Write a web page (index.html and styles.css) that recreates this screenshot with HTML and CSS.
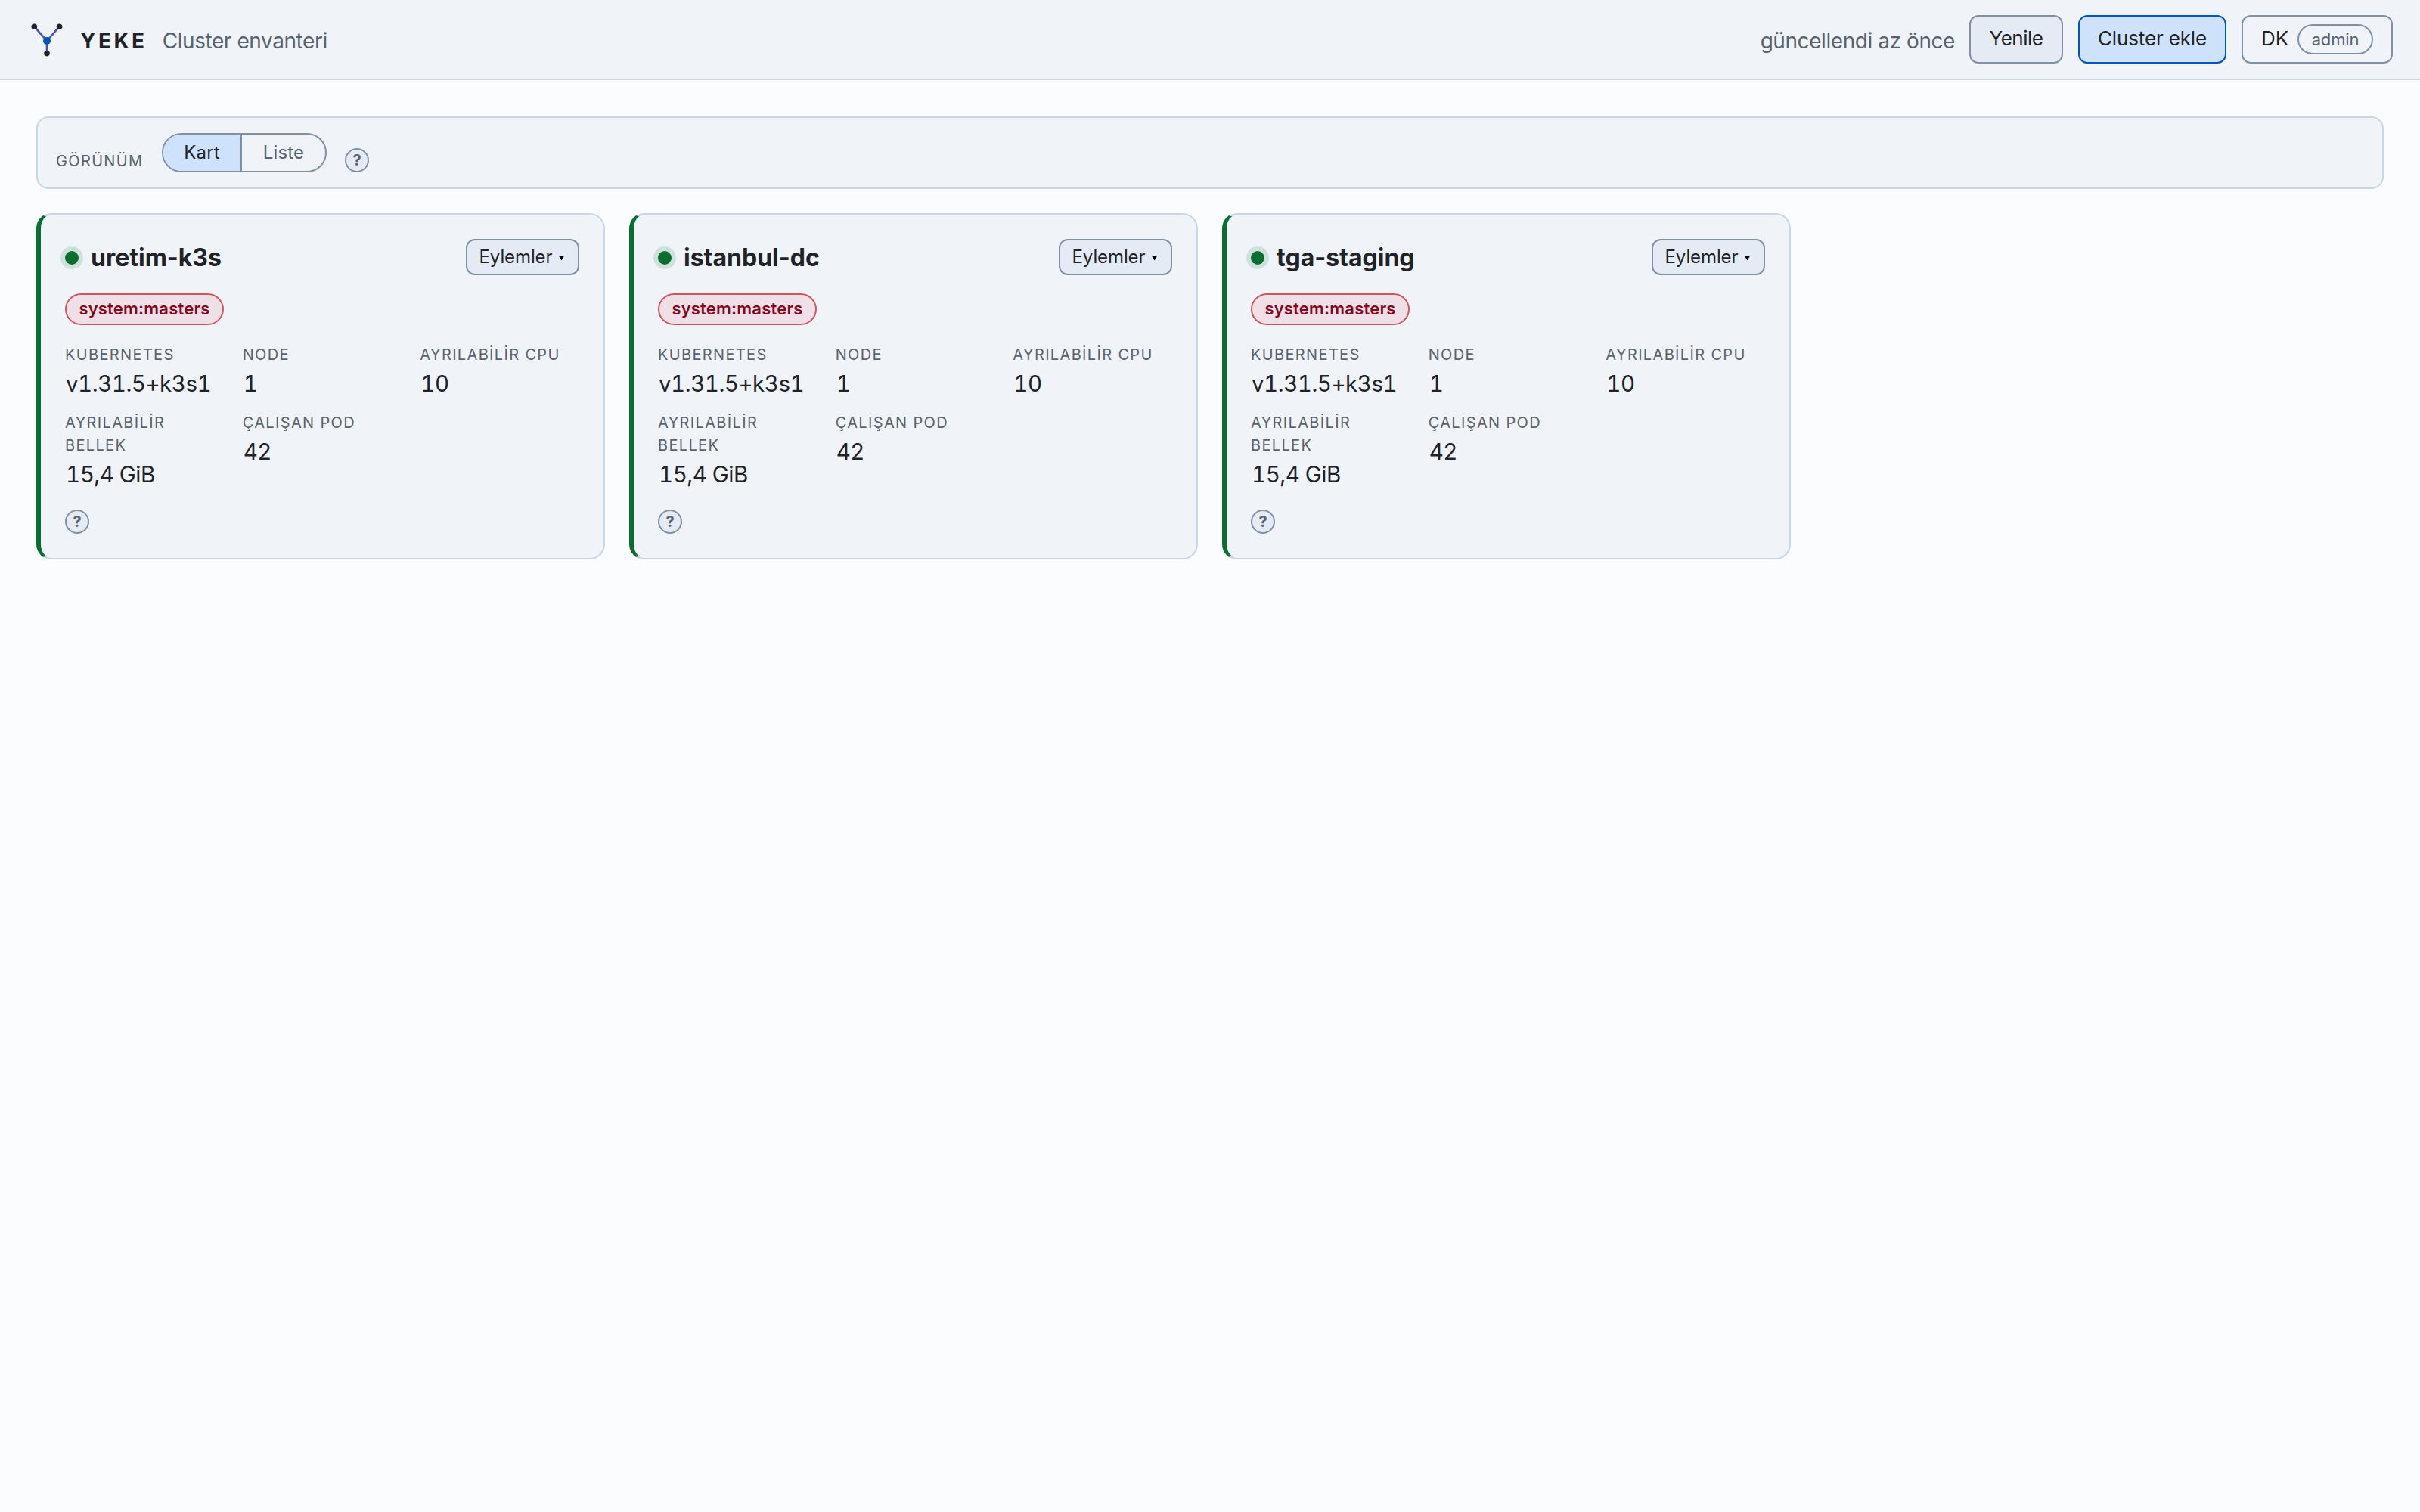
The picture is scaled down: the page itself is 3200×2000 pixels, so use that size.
FILE: index.html
```html
<!DOCTYPE html>
<html lang="tr">
  <head>
    <meta charset="UTF-8" />
    <meta name="viewport" content="width=device-width,initial-scale=1.0" />
    <title>YEKE - Cluster envanteri</title>
    <link rel="stylesheet" href="styles.css">
  </head>
  <body>
    <header class="topbar">
      <svg class="logo" viewBox="0 0 52 52" aria-hidden="true">
        <path d="M9.3 9.2 26 28 42.6 9.2M26 28v16.6" />
        <circle class="node" cx="9.3" cy="9.2" r="3.8" />
        <circle class="node" cx="42.6" cy="9.2" r="3.8" />
        <circle class="node" cx="26" cy="44.6" r="3.8" />
        <circle class="hub" cx="26" cy="28" r="5" />
      </svg>
      <strong class="brand">YEKE</strong>
      <span class="muted page-name">Cluster envanteri</span>
      <span class="muted updated">güncellendi az önce</span>
      <button class="btn btn-refresh">Yenile</button>
      <button class="btn btn-primary">Cluster ekle</button>
      <button class="btn btn-user">DK <span class="role">admin</span></button>
    </header>
    <main>
      <div class="toolbar">
        <span class="label">GÖRÜNÜM</span>
        <div class="segment">
          <button class="active">Kart</button>
          <button>Liste</button>
        </div>
        <button class="help">?</button>
      </div>
      <div class="cards">
        <article class="card">
          <div class="card-head">
            <span class="dot"></span>
            <h2>uretim-k3s</h2>
            <button class="btn-actions">Eylemler <svg viewBox="0 0 8 7"><path d="M0 0h8L4 7z" /></svg></button>
          </div>
          <span class="pill">system:masters</span>
          <dl>
            <div><dt>KUBERNETES</dt><dd>v1.31.5+k3s1</dd></div>
            <div><dt>NODE</dt><dd>1</dd></div>
            <div><dt>AYRILABİLİR CPU</dt><dd>10</dd></div>
            <div><dt>AYRILABİLİR BELLEK</dt><dd>15,4 GiB</dd></div>
            <div><dt>ÇALIŞAN POD</dt><dd>42</dd></div>
          </dl>
          <button class="help">?</button>
        </article>
        <article class="card">
          <div class="card-head">
            <span class="dot"></span>
            <h2>istanbul-dc</h2>
            <button class="btn-actions">Eylemler <svg viewBox="0 0 8 7"><path d="M0 0h8L4 7z" /></svg></button>
          </div>
          <span class="pill">system:masters</span>
          <dl>
            <div><dt>KUBERNETES</dt><dd>v1.31.5+k3s1</dd></div>
            <div><dt>NODE</dt><dd>1</dd></div>
            <div><dt>AYRILABİLİR CPU</dt><dd>10</dd></div>
            <div><dt>AYRILABİLİR BELLEK</dt><dd>15,4 GiB</dd></div>
            <div><dt>ÇALIŞAN POD</dt><dd>42</dd></div>
          </dl>
          <button class="help">?</button>
        </article>
        <article class="card">
          <div class="card-head">
            <span class="dot"></span>
            <h2>tga-staging</h2>
            <button class="btn-actions">Eylemler <svg viewBox="0 0 8 7"><path d="M0 0h8L4 7z" /></svg></button>
          </div>
          <span class="pill">system:masters</span>
          <dl>
            <div><dt>KUBERNETES</dt><dd>v1.31.5+k3s1</dd></div>
            <div><dt>NODE</dt><dd>1</dd></div>
            <div><dt>AYRILABİLİR CPU</dt><dd>10</dd></div>
            <div><dt>AYRILABİLİR BELLEK</dt><dd>15,4 GiB</dd></div>
            <div><dt>ÇALIŞAN POD</dt><dd>42</dd></div>
          </dl>
          <button class="help">?</button>
        </article>
      </div>
    </main>
  </body>
</html>
```
FILE: styles.css
```css
:root {
  --bg: #fbfcfe;
  --surface: #f0f4f9;
  --raised: #e4ebf4;
  --border: #cbd6e4;
  --border-strong: #8190a2;
  --text: #1f2328;
  --muted: #59636e;
  --accent: #0055be;
  --accent-soft: #cfe2fb;
  --ok: #0b6e31;
  --danger: #86061d;
}
* {
  box-sizing: border-box;
}
body {
  margin: 0;
  min-height: 100vh;
  background: var(--bg);
  color: var(--text);
  font-family: Inter, "Liberation Sans", sans-serif;
  font-size: 28px;
}
button {
  margin: 0;
  padding: 0;
  color: inherit;
  font-family: inherit;
  cursor: pointer;
}

/* top bar */
.topbar {
  display: flex;
  align-items: center;
  height: 106px;
  padding: 0 36px;
  background: var(--surface);
  border-bottom: 2px solid var(--border);
}
.logo {
  width: 52px;
  height: 52px;
}
.logo path {
  fill: none;
  stroke: #4a55ad;
  stroke-width: 2.6;
}
.logo .node {
  fill: var(--text);
}
.logo .hub {
  fill: var(--accent);
}
.brand {
  margin-left: 18px;
  padding-top: 4px;
  letter-spacing: 3.5px;
}
.muted {
  padding-top: 4px;
  color: var(--muted);
  letter-spacing: -0.43px;
}
.page-name {
  margin-left: 20px;
}
.updated {
  margin-left: auto;
  margin-right: -1px;
}
.btn {
  display: flex;
  align-items: center;
  justify-content: center;
  height: 64px;
  margin-left: 20px;
  padding-bottom: 4px;
  border: 2px solid var(--border-strong);
  border-radius: 12px;
  background: var(--raised);
  font-size: 26px;
  letter-spacing: -0.15px;
}
.btn-refresh {
  width: 124px;
  letter-spacing: -0.5px;
}
.btn-primary {
  width: 196px;
  border-color: var(--accent);
  background: var(--accent-soft);
}
.btn-user {
  width: 200px;
  gap: 12px;
  background: transparent;
}
.role {
  width: 100px;
  height: 40px;
  margin-top: 4px;
  border: 2px solid var(--border-strong);
  border-radius: 20px;
  color: var(--muted);
  font-size: 22px;
  line-height: 36px;
  text-align: center;
}

main {
  padding: 48px;
}
.toolbar {
  display: flex;
  align-items: flex-end;
  gap: 24px;
  height: 96px;
  margin-bottom: 32px;
  padding: 20px 24px;
  background: var(--surface);
  border: 2px solid var(--border);
  border-radius: 16px;
}
.label {
  width: 116px;
  font-size: 20px;
  line-height: 30px;
  letter-spacing: 1.35px;
  color: var(--muted);
}
.segment {
  display: flex;
  height: 52px;
  border: 2px solid var(--border-strong);
  border-radius: 26px;
  overflow: hidden;
}
.segment button {
  width: 110px;
  padding-bottom: 2px;
  border: 0;
  background: transparent;
  color: var(--muted);
  font-size: 24px;
  letter-spacing: 0.15px;
}
.segment .active {
  width: 104px;
  border-right: 2px solid var(--border-strong);
  background: var(--accent-soft);
  color: var(--text);
}
.help {
  display: block;
  width: 32px;
  height: 32px;
  border: 2px solid var(--border-strong);
  border-radius: 50%;
  background: var(--raised);
  color: var(--muted);
  font-size: 20px;
  font-weight: 700;
  line-height: 28px;
}

/* cluster cards */
.cards {
  display: grid;
  grid-template-columns: repeat(4, 1fr);
  gap: 32px;
}
.card {
  padding: 32px;
  background: var(--surface);
  border: 2px solid var(--border);
  border-left: 6px solid var(--ok);
  border-radius: 20px;
}
.card-head {
  display: flex;
  align-items: center;
  margin-bottom: 24px;
}
.dot {
  width: 18px;
  height: 18px;
  margin-top: 2px;
  border-radius: 50%;
  background: var(--ok);
  box-shadow: 0 0 0 6px #cfe1db;
}
.card h2 {
  margin: 2px 0 0 16px;
  font-size: 32px;
  line-height: 40px;
}
.btn-actions {
  display: flex;
  align-items: center;
  justify-content: center;
  gap: 9px;
  width: 150px;
  height: 48px;
  margin-left: auto;
  padding: 0 2px 1px 0;
  border: 2px solid var(--border-strong);
  border-radius: 12px;
  background: var(--raised);
  font-size: 24px;
  letter-spacing: -0.1px;
}
.btn-actions svg {
  width: 7px;
  height: 7px;
  margin-top: 4px;
}
.pill {
  display: block;
  width: 210px;
  height: 42px;
  border: 2px solid #cf5560;
  border-radius: 21px;
  background: #efe0e8;
  color: var(--danger);
  font-size: 22px;
  font-weight: 600;
  line-height: 36px;
  letter-spacing: 0.2px;
  text-align: center;
}
.card dl {
  display: grid;
  grid-template-columns: repeat(3, 1fr);
  gap: 16px 24px;
  margin: 24px 0 26px;
}
.card dt {
  color: var(--muted);
  font-size: 20px;
  line-height: 30px;
  letter-spacing: 1.35px;
}
.card dd {
  margin: 2px 0 0;
  padding-left: 1px;
  font-size: 29.5px;
  line-height: 42px;
  letter-spacing: -0.5px;
  font-variant-numeric: tabular-nums;
}
```
